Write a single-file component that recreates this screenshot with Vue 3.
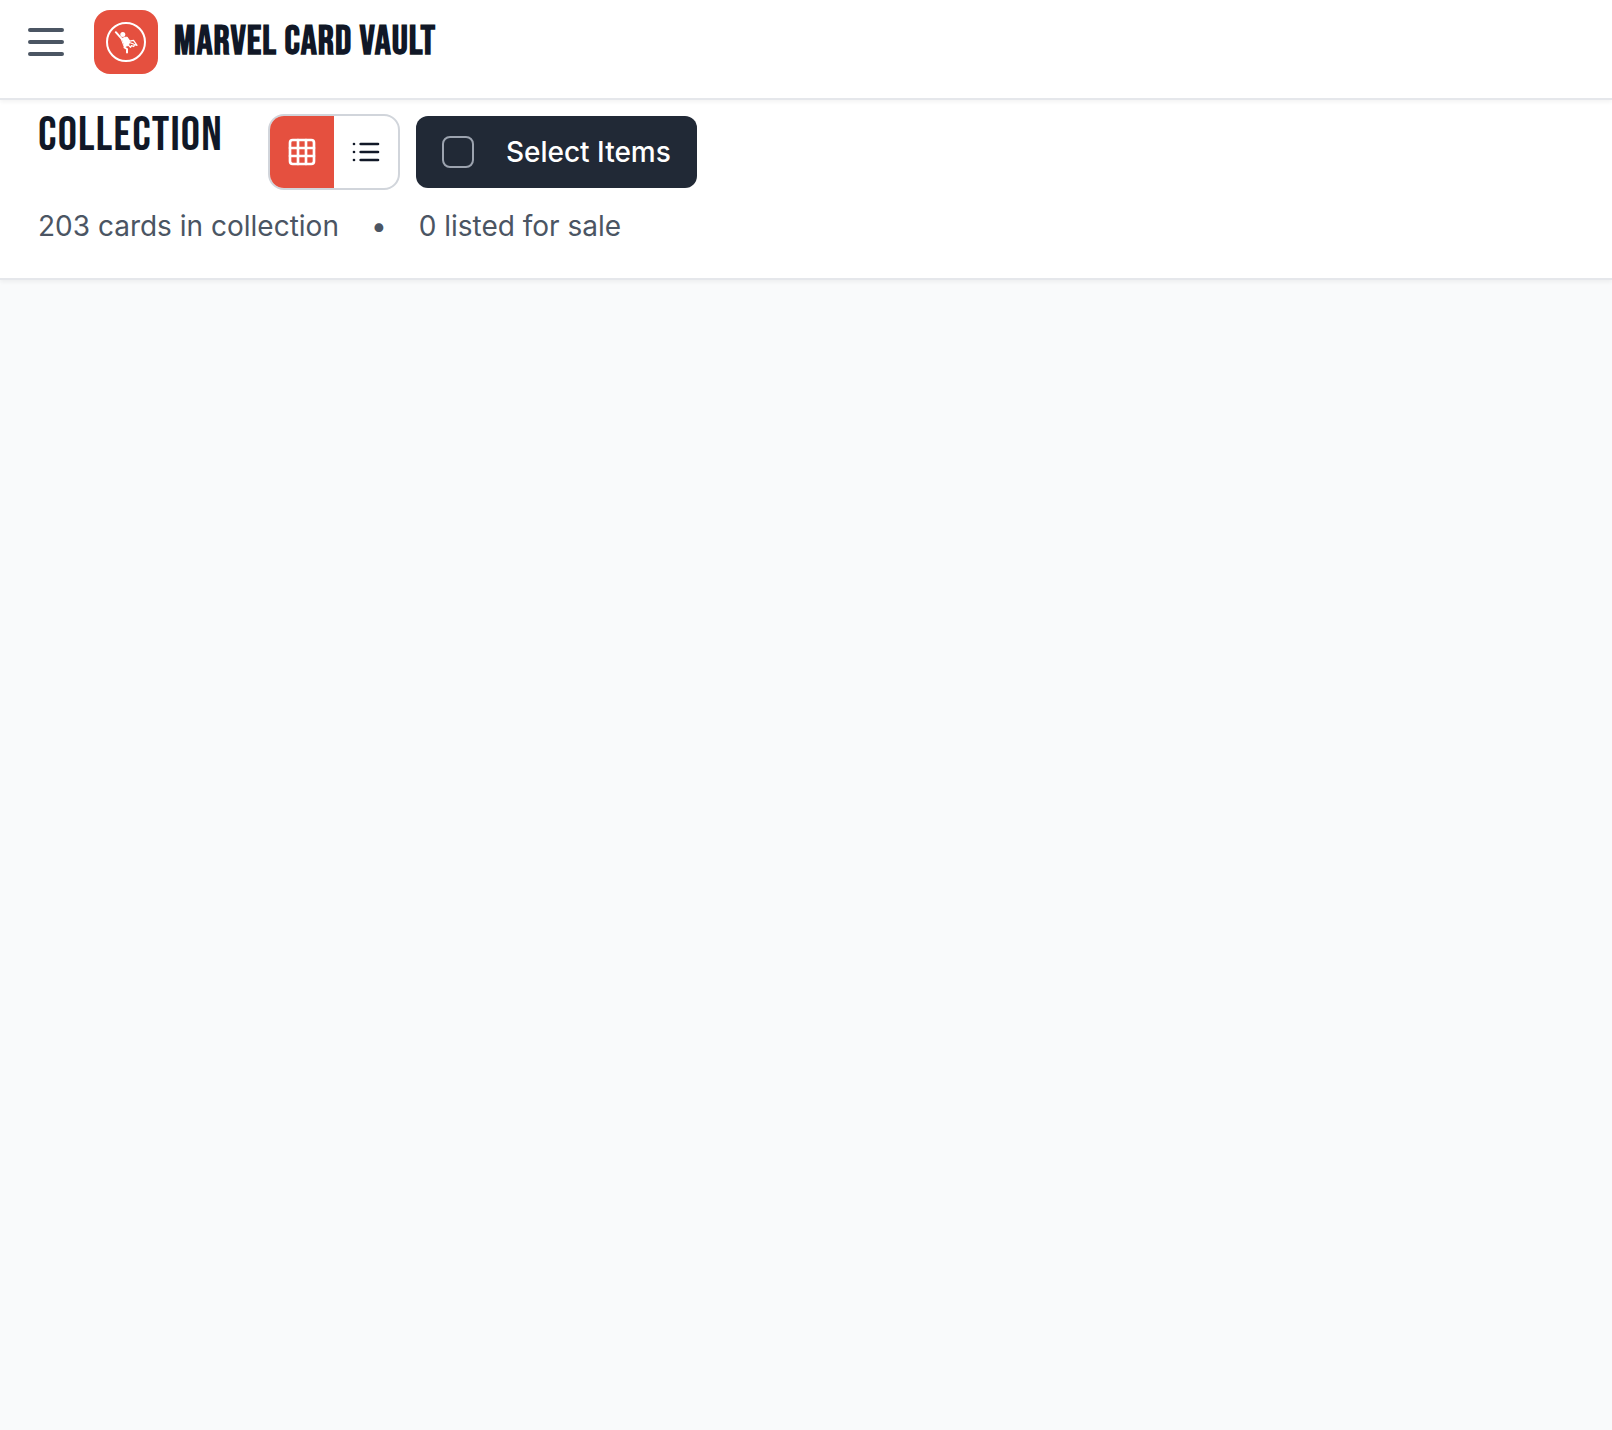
<script setup>
import { ref } from 'vue'

const view = ref('grid')
const selecting = ref(false)
</script>

<template>
  <div class="page">
    <header class="topbar">
      <button class="menu" type="button" aria-label="Open menu">
        <svg viewBox="0 0 24 24" fill="none" stroke="currentColor" stroke-width="2" stroke-linecap="round">
          <path d="M4 6h16M4 12h16M4 18h16" />
        </svg>
      </button>
      <a class="brand" href="#">
        <span class="logo">
          <svg viewBox="0 0 40 40" fill="none" stroke="#fff" stroke-linecap="round" stroke-linejoin="round">
            <circle cx="20" cy="20" r="19" stroke-width="2" />
            <circle cx="16.800" cy="12.400" r="2.500" fill="#fff" stroke="none" />
            <path d="M9.800 10.200l6.200 7" stroke-width="2" />
            <path d="M15.500 16.500l5-1.500 3 5-1 3.500-4 1z" fill="#fff" stroke-width="1" />
            <path d="M19.300 23l-.8 2.500 2.500 1.500v3.500" stroke-width="2" />
            <path d="M21 15.500l2.700 3.600 3.800-.8 3.500 5-2.500-.6-.8 1.800-2.200-.8-1 1.600-2.200-2.200M23.500 20.500l4 1.500" stroke-width="1.300" />
          </svg>
        </span>
        <span class="name">MARVEL CARD VAULT</span>
      </a>
    </header>

    <section class="collection">
      <div class="tools">
        <h1>COLLECTION</h1>
        <div class="views" role="group" aria-label="View">
          <button type="button" aria-label="Grid view" :class="{ active: view === 'grid' }" @click="view = 'grid'">
            <svg viewBox="0 0 24 24" fill="none" stroke="currentColor" stroke-width="2" stroke-linecap="round" stroke-linejoin="round">
              <rect x="3" y="3" width="18" height="18" rx="2" />
              <path d="M3 9h18M3 15h18M9 3v18M15 3v18" />
            </svg>
          </button>
          <button type="button" aria-label="List view" :class="{ active: view === 'list' }" @click="view = 'list'">
            <svg viewBox="0 0 24 24" fill="none" stroke="currentColor" stroke-width="2" stroke-linecap="round">
              <path d="M8 6h13M8 12h13M8 18h13M3 6h.01M3 12h.01M3 18h.01" />
            </svg>
          </button>
        </div>
        <label class="select">
          <input v-model="selecting" type="checkbox">
          <span>Select Items</span>
        </label>
      </div>
      <p class="stats">
        <span>203 cards in collection</span>
        <span>•</span>
        <span>0 listed for sale</span>
      </p>
    </section>
  </div>
</template>

<style>
body {
  background: #f9fafb;
}
</style>

<style scoped>
.page {
  min-height: 100vh;
  background: #f9fafb;
  color: #111827;
  font-family: Inter, sans-serif;
  font-size: 28px;
}

.topbar,
.collection {
  border-bottom: 2px solid #e5e7eb;
  background: #fff;
  box-shadow: 0 2px 4px rgba(0, 0, 0, 0.05);
}

.topbar {
  position: relative;
  display: flex;
  align-items: center;
  gap: 24px;
  padding: 10px 22px 24px;
}

button {
  display: flex;
  align-items: center;
  justify-content: center;
  padding: 0;
  border: 0;
  background: none;
  color: inherit;
  cursor: pointer;
}

.menu {
  color: #4b5563;
}

.menu svg {
  width: 48px;
  height: 48px;
}

.brand {
  display: flex;
  align-items: center;
  gap: 16px;
  color: inherit;
  text-decoration: none;
}

.logo {
  display: flex;
  align-items: center;
  justify-content: center;
  width: 64px;
  height: 64px;
  border-radius: 16px;
  background: #e5503f;
}

.logo svg {
  width: 40px;
  height: 40px;
}

.name,
h1 {
  font-family: "Bebas Neue", "Liberation Sans Narrow", sans-serif;
  letter-spacing: 0.025em;
  line-height: 44px;
  white-space: nowrap;
}

.name {
  font-size: 40px;
  font-weight: 700;
}

h1 {
  margin: 0 45px 0 0;
  font-size: 48px;
  font-weight: 400;
}

.collection {
  padding: 14px 38px 32px;
}

.tools {
  display: flex;
  align-items: flex-start;
}

.views {
  display: flex;
  overflow: hidden;
  border: 2px solid #d1d5db;
  border-radius: 16px;
}

.views button {
  width: 64px;
  height: 72px;
}

.views .active {
  background: #e5503f;
  color: #fff;
}

.views svg {
  width: 32px;
  height: 32px;
}

.select {
  display: flex;
  align-items: center;
  align-self: center;
  gap: 32px;
  height: 72px;
  margin-left: 16px;
  padding: 0 26px;
  border-radius: 12px;
  background: #212936;
  color: #fff;
  font-weight: 500;
  white-space: nowrap;
  cursor: pointer;
}

.select input {
  appearance: none;
  width: 32px;
  height: 32px;
  margin: 0;
  border: 2px solid #9ca3af;
  border-radius: 8px;
}

.select input:checked {
  background: #e5503f;
}

.stats {
  display: flex;
  gap: 32px;
  margin: 16px 0 0;
  color: #4b5563;
  line-height: 40px;
}
</style>
